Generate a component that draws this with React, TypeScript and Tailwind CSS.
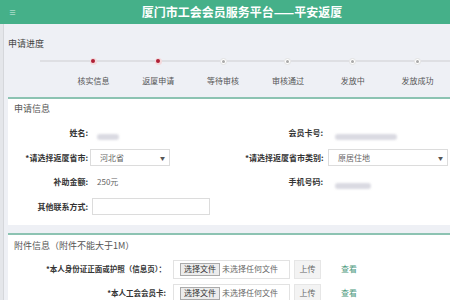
import React from "react";

const steps = [
  { label: "核实信息", done: true },
  { label: "返厦申请", done: true },
  { label: "等待审核", done: false },
  { label: "审核通过", done: false },
  { label: "发放中", done: false },
  { label: "发放成功", done: false },
];

const Blur = ({ w }: { w: number }) => (
  <span
    className="inline-block h-[6px] rounded-sm bg-[#dadae2] blur-[1px]"
    style={{ width: w }}
  />
);

const Label = ({ children, w = "w-[80px]" }: { children: React.ReactNode; w?: string }) => (
  <div className={`${w} shrink-0 whitespace-nowrap text-right text-[8px] font-bold text-[#333]`}>{children}</div>
);

const Select = ({ value, w }: { value: string; w: string }) => (
  <div className={`${w} h-[17px] border border-[#dcdcdc] bg-white flex items-center justify-between pl-[9px] pr-[4px] text-[8px] text-[#666]`}>
    <span>{value}</span>
    <span className="text-[5px] text-[#555]">▼</span>
  </div>
);

const FileRow = ({ label }: { label: string }) => (
  <div className="h-[24px] flex items-center">
    <div className="w-[158px] shrink-0 whitespace-nowrap text-right text-[7.5px] font-bold text-[#333]">{label}</div>
    <div className="ml-[7px] w-[117px] h-[19px] border border-[#e2e2e2] bg-white flex items-center pl-[6px] gap-[2px]">
      <span className="h-[13px] px-[3px] flex items-center border border-[#aaa] bg-[#ececec] text-[8px] text-[#333]">选择文件</span>
      <span className="text-[8px] text-[#666]">未选择任何文件</span>
    </div>
    <div className="ml-[4px] w-[27px] h-[19px] border border-[#e6e6e6] bg-[#f3f3f3] flex items-center justify-center text-[8px] text-[#666]">上传</div>
    <div className="ml-[20px] text-[8px] text-[#4f9a80]">查看</div>
  </div>
);

export default function App() {
  return (
    <div
      className="w-[450px] h-[300px] overflow-hidden bg-[#eef0f5] flex flex-col"
      style={{ fontFamily: '"Noto Sans CJK SC", "Noto Sans", sans-serif' }}
    >
      <header className="h-[24px] shrink-0 bg-[#45b089] relative flex items-center justify-center pl-[34px]">
        <span className="absolute left-[9px] top-[9px] text-[7px] leading-none text-white/80">≡</span>
        <h1 className="text-[12px] font-bold text-white">厦门市工会会员服务平台——平安返厦</h1>
      </header>

      <div className="flex flex-1">
        <div className="w-[4px] shrink-0 bg-[#e4e6ea] border-r border-[#d5d7db]" />
        <div className="flex-1 flex flex-col">
          <div className="pl-[4px] pt-[14px] text-[9px] leading-[12px] text-[#444]">申请进度</div>

          <div className="mt-[7px] flex flex-col">
            <div className="flex items-center h-[8px]">
              <div className="w-[36px] shrink-0" />
              <div className="w-[21px] shrink-0 h-[2px] bg-[#dedfe3]" />
              <div className="grid grid-cols-6 w-[389px]">
                {steps.map((s) => (
                  <div key={s.label} className="flex items-center">
                    <div className="flex-1 h-[2px] bg-[#dedfe3]" />
                    {s.done ? (
                      <div className="w-[7px] h-[7px] rounded-full bg-[#f3d9dc] flex items-center justify-center">
                        <div className="w-[4px] h-[4px] rounded-full bg-[#b01f35]" />
                      </div>
                    ) : (
                      <div className="w-[7px] h-[7px] rounded-full bg-white border border-[#e1e1e1] flex items-center justify-center">
                        <div className="w-[3px] h-[3px] rounded-full bg-[#a9a9a9]" />
                      </div>
                    )}
                    <div className="flex-1 h-[2px] bg-[#dedfe3]" />
                  </div>
                ))}
              </div>
            </div>
            <div className="flex mt-[10px]">
              <div className="w-[57px] shrink-0" />
              <div className="grid grid-cols-6 w-[389px]">
                {steps.map((s) => (
                  <div key={s.label} className="text-center text-[8px] leading-[12px] text-[#555]">
                    {s.label}
                  </div>
                ))}
              </div>
            </div>
          </div>

          <section className="ml-[4px] mt-[10px] bg-white border-t-2 border-[#8cc3b2] flex flex-col">
            <div className="h-[19px] flex items-center pl-[6px] text-[9px] text-[#555]">申请信息</div>
            <div className="pt-[3px] pb-[6px]">
              <div className="h-[24.5px] flex items-center">
                <Label>姓名:</Label>
                <div className="ml-[9px] w-[148px]"><Blur w={22} /></div>
                <Label w="w-[78px]">会员卡号:</Label>
                <div className="ml-[12px]"><Blur w={62} /></div>
              </div>
              <div className="h-[24.5px] flex items-center">
                <Label>*请选择返厦省市:</Label>
                <div className="ml-[2px] w-[155px]"><Select value="河北省" w="w-[80px]" /></div>
                <Label w="w-[78px]">*请选择返厦省市类别:</Label>
                <div className="ml-[5px]"><Select value="原居住地" w="w-[120px]" /></div>
              </div>
              <div className="h-[24.5px] flex items-center">
                <Label>补助金额:</Label>
                <div className="ml-[9px] w-[148px] text-[8px] text-[#666]">250元</div>
                <Label w="w-[78px]">手机号码:</Label>
                <div className="ml-[12px]"><Blur w={36} /></div>
              </div>
              <div className="h-[24.5px] flex items-center">
                <Label>其他联系方式:</Label>
                <div className="ml-[4px] w-[118px] h-[17px] border border-[#dcdcdc] bg-white" />
              </div>
            </div>
          </section>

          <section className="ml-[4px] mt-[8px] bg-white border-t-2 border-[#8cc3b2] flex flex-col flex-1">
            <div className="h-[21px] flex items-center pl-[6px] text-[9px] text-[#555]">附件信息（附件不能大于1M）</div>
            <div className="pt-[1px]">
              <FileRow label="*本人身份证正面或护照（信息页）：" />
              <FileRow label="*本人工会会员卡:" />
            </div>
          </section>
        </div>
      </div>
    </div>
  );
}
